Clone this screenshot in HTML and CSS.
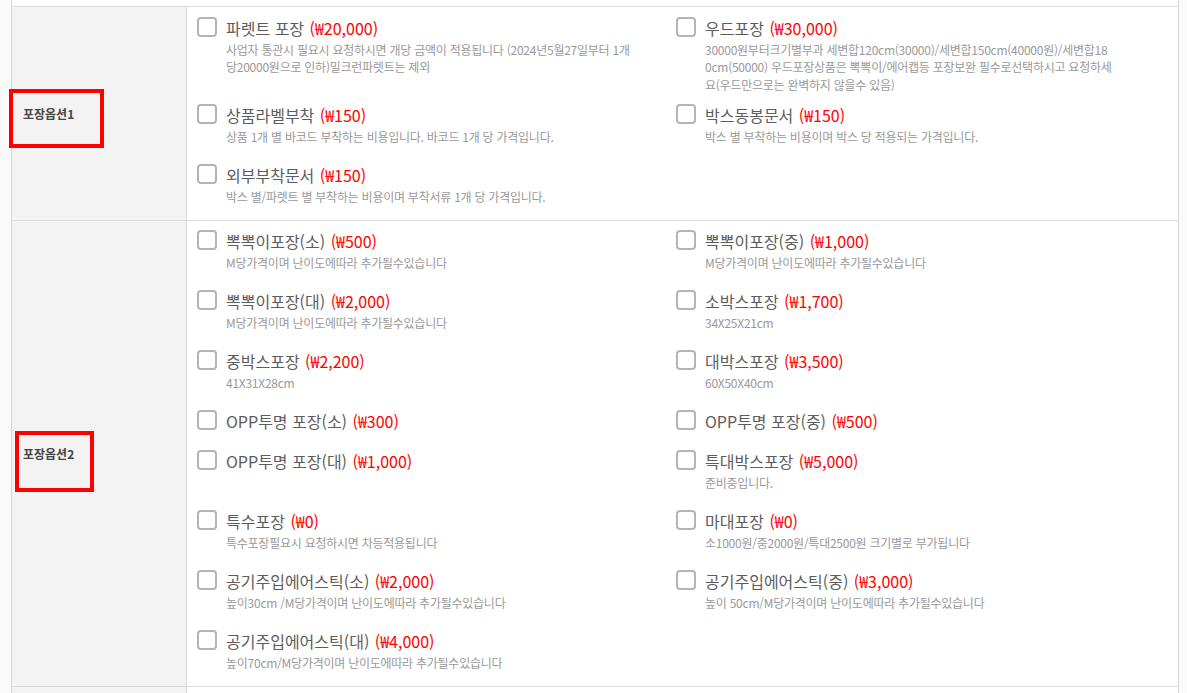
FILE: index.html
```html
<!DOCTYPE html>
<html lang="ko">
<head>
  <meta charset="UTF-8">
  <title>포장옵션</title>
  <link rel="stylesheet" href="styles.css">
</head>
<body>
  <div class="opt-table">

    <div class="opt-row">
      <div class="opt-head">
        <span class="opt-label">포장옵션1<span class="mark mark-1"></span></span>
      </div>
      <div class="opt-body">
        <label class="opt-item">
          <input type="checkbox">
          <span class="opt-text">
            <span class="opt-name">파렛트 포장 <em class="price">(₩20,000)</em></span>
            <span class="opt-desc">사업자 통관시 필요시 요청하시면 개당 금액이 적용됩니다 (2024년5월27일부터 1개<br>당20000원으로 인하)밀크런파렛트는 제외</span>
          </span>
        </label>
        <label class="opt-item">
          <input type="checkbox">
          <span class="opt-text">
            <span class="opt-name">우드포장 <em class="price">(₩30,000)</em></span>
            <span class="opt-desc">30000원부터크기별부과 세변합120cm(30000)/세변합150cm(40000원)/세변합18<br>0cm(50000) 우드포장상품은 뽁뽁이/에어캡등 포장보완 필수로선택하시고 요청하세<br>요(우드만으로는 완벽하지 않을수 있음)</span>
          </span>
        </label>
        <label class="opt-item">
          <input type="checkbox">
          <span class="opt-text">
            <span class="opt-name">상품라벨부착 <em class="price">(₩150)</em></span>
            <span class="opt-desc">상품 1개 별 바코드 부착하는 비용입니다. 바코드 1개 당 가격입니다.</span>
          </span>
        </label>
        <label class="opt-item">
          <input type="checkbox">
          <span class="opt-text">
            <span class="opt-name">박스동봉문서 <em class="price">(₩150)</em></span>
            <span class="opt-desc">박스 별 부착하는 비용이며 박스 당 적용되는 가격입니다.</span>
          </span>
        </label>
        <label class="opt-item">
          <input type="checkbox">
          <span class="opt-text">
            <span class="opt-name">외부부착문서 <em class="price">(₩150)</em></span>
            <span class="opt-desc">박스 별/파렛트 별 부착하는 비용이며 부착서류 1개 당 가격입니다.</span>
          </span>
        </label>
      </div>
    </div>

    <div class="opt-row">
      <div class="opt-head">
        <span class="opt-label">포장옵션2<span class="mark mark-2"></span></span>
      </div>
      <div class="opt-body opt-body-tight">
        <label class="opt-item">
          <input type="checkbox">
          <span class="opt-text">
            <span class="opt-name">뽁뽁이포장(소) <em class="price">(₩500)</em></span>
            <span class="opt-desc">M당가격이며 난이도에따라 추가될수있습니다</span>
          </span>
        </label>
        <label class="opt-item">
          <input type="checkbox">
          <span class="opt-text">
            <span class="opt-name">뽁뽁이포장(중) <em class="price">(₩1,000)</em></span>
            <span class="opt-desc">M당가격이며 난이도에따라 추가될수있습니다</span>
          </span>
        </label>
        <label class="opt-item">
          <input type="checkbox">
          <span class="opt-text">
            <span class="opt-name">뽁뽁이포장(대) <em class="price">(₩2,000)</em></span>
            <span class="opt-desc">M당가격이며 난이도에따라 추가될수있습니다</span>
          </span>
        </label>
        <label class="opt-item">
          <input type="checkbox">
          <span class="opt-text">
            <span class="opt-name">소박스포장 <em class="price">(₩1,700)</em></span>
            <span class="opt-desc">34X25X21cm</span>
          </span>
        </label>
        <label class="opt-item">
          <input type="checkbox">
          <span class="opt-text">
            <span class="opt-name">중박스포장 <em class="price">(₩2,200)</em></span>
            <span class="opt-desc">41X31X28cm</span>
          </span>
        </label>
        <label class="opt-item">
          <input type="checkbox">
          <span class="opt-text">
            <span class="opt-name">대박스포장 <em class="price">(₩3,500)</em></span>
            <span class="opt-desc">60X50X40cm</span>
          </span>
        </label>
        <label class="opt-item">
          <input type="checkbox">
          <span class="opt-text">
            <span class="opt-name">OPP투명 포장(소) <em class="price">(₩300)</em></span>
          </span>
        </label>
        <label class="opt-item">
          <input type="checkbox">
          <span class="opt-text">
            <span class="opt-name">OPP투명 포장(중) <em class="price">(₩500)</em></span>
          </span>
        </label>
        <label class="opt-item">
          <input type="checkbox">
          <span class="opt-text">
            <span class="opt-name">OPP투명 포장(대) <em class="price">(₩1,000)</em></span>
          </span>
        </label>
        <label class="opt-item">
          <input type="checkbox">
          <span class="opt-text">
            <span class="opt-name">특대박스포장 <em class="price">(₩5,000)</em></span>
            <span class="opt-desc">준비중입니다.</span>
          </span>
        </label>
        <label class="opt-item">
          <input type="checkbox">
          <span class="opt-text">
            <span class="opt-name">특수포장 <em class="price">(₩0)</em></span>
            <span class="opt-desc">특수포장필요시 요청하시면 차등적용됩니다</span>
          </span>
        </label>
        <label class="opt-item">
          <input type="checkbox">
          <span class="opt-text">
            <span class="opt-name">마대포장 <em class="price">(₩0)</em></span>
            <span class="opt-desc">소1000원/중2000원/특대2500원 크기별로 부가됩니다</span>
          </span>
        </label>
        <label class="opt-item">
          <input type="checkbox">
          <span class="opt-text">
            <span class="opt-name">공기주입에어스틱(소) <em class="price">(₩2,000)</em></span>
            <span class="opt-desc">높이30cm /M당가격이며 난이도에따라 추가될수있습니다</span>
          </span>
        </label>
        <label class="opt-item">
          <input type="checkbox">
          <span class="opt-text">
            <span class="opt-name">공기주입에어스틱(중) <em class="price">(₩3,000)</em></span>
            <span class="opt-desc">높이 50cm/M당가격이며 난이도에따라 추가될수있습니다</span>
          </span>
        </label>
        <label class="opt-item">
          <input type="checkbox">
          <span class="opt-text">
            <span class="opt-name">공기주입에어스틱(대) <em class="price">(₩4,000)</em></span>
            <span class="opt-desc">높이70cm/M당가격이며 난이도에따라 추가될수있습니다</span>
          </span>
        </label>
      </div>
    </div>

    <div class="opt-row opt-row-stub">
      <div class="opt-head"></div>
      <div class="opt-body"></div>
    </div>

  </div>
</body>
</html>
```

FILE: styles.css
```css
body {
  margin: 0;
  background-color: #fafafa;
  font-family: "Noto Sans CJK KR", "Noto Sans", sans-serif;
  color: #555;
}

.opt-table {
  margin-left: 11px;
  width: 1168px;
  box-sizing: border-box;
  padding-top: 6px;
  background-color: #fff;
  border-left: 1px solid #d6d6d6;
  border-right: 1px solid #d6d6d6;
}

.opt-row {
  display: grid;
  grid-template-columns: 175px 1fr;
  border-top: 1px solid #dcdcdc;
}

.opt-head {
  display: flex;
  align-items: center;
  padding-left: 11px;
  background-color: #f3f3f3;
  border-right: 1px solid #dcdcdc;
}

.opt-label {
  position: relative;
  font-size: 12px;
  line-height: 16px;
  font-weight: bold;
  color: #444;
}

/* red highlight boxes drawn over the labels */
.mark {
  position: absolute;
  border: 4px solid #f00;
  box-sizing: border-box;
}

.mark-1 {
  left: -14px;
  top: -17px;
  width: 95px;
  height: 59px;
}

.mark-2 {
  left: -8px;
  top: -15px;
  width: 79px;
  height: 61px;
}

.opt-body {
  display: grid;
  grid-template-columns: 479px 479px;
  align-content: start;
  row-gap: 11px;
  padding: 10px 10px 7px 10px;
}

.opt-body-tight {
  padding-top: 9px;
}

.opt-item {
  display: flex;
  align-items: flex-start;
  gap: 9px;
  min-height: 29px;
  cursor: pointer;
}

.opt-item input[type="checkbox"] {
  appearance: none;
  -webkit-appearance: none;
  flex: none;
  width: 20px;
  height: 20px;
  margin: 0;
  border: 2px solid #b4b4b4;
  border-radius: 4px;
  background: #fff;
}

.opt-text {
  display: flex;
  flex-direction: column;
}

.opt-name {
  font-size: 16px;
  line-height: 22px;
  color: #5c5c5c;
}

.price {
  font-style: normal;
  font-size: 16px;
  color: #f00;
  margin-left: 1px;
}

.opt-desc {
  margin-top: 2px;
  min-height: 25px;
  font-size: 12px;
  line-height: 17.4px;
  letter-spacing: -0.25px;
  color: #999;
  white-space: nowrap;
}

.opt-row-stub {
  height: 20px;
}
```
